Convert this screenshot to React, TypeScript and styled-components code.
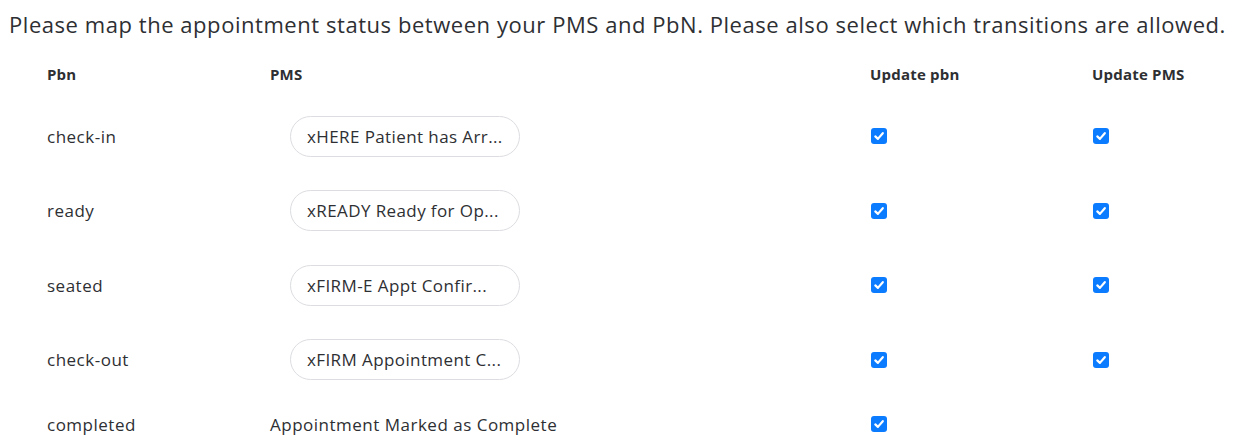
import React from 'react';
import styled, { createGlobalStyle } from 'styled-components';

const GlobalStyle = createGlobalStyle`
  html, body {
    margin: 0;
    padding: 0;
    background: #ffffff;
  }
  body {
    font-family: 'Open Sans', 'Noto Sans', sans-serif;
    color: #2e2f33;
  }
`;

const Page = styled.div`
  width: 1239px;
  height: 446px;
  overflow: hidden;
  padding: 10px 0 0 9px;
  box-sizing: border-box;
`;

const Title = styled.h2`
  margin: 0;
  font-size: 22px;
  font-weight: 400;
  line-height: 28px;
  letter-spacing: 0.55px;
  color: #2e2f33;
  white-space: nowrap;
`;

const Table = styled.div`
  display: grid;
  grid-template-columns: 223px 600px 222px 1fr;
  padding-left: 38px;
  margin-top: 25px;
`;

const HeadCell = styled.div`
  font-size: 15px;
  font-weight: 700;
  letter-spacing: 0.2px;
  line-height: 22px;
  height: 22px;
  margin-bottom: 14px;
`;

const Cell = styled.div<{ $short?: boolean }>`
  display: flex;
  align-items: center;
  height: ${({ $short }) => ($short ? '54px' : '74.5px')};
  font-size: 17px;
  letter-spacing: 0.5px;
`;

const Pill = styled.div`
  margin-left: 20px;
  width: 230px;
  height: 41px;
  box-sizing: border-box;
  border: 1px solid #dcdde1;
  border-radius: 21px;
  padding: 0 16px;
  display: flex;
  align-items: center;
  font-size: 17px;
  letter-spacing: 0.4px;
  white-space: nowrap;
  overflow: hidden;
`;

const Box = styled.span`
  display: inline-flex;
  align-items: center;
  justify-content: center;
  width: 16px;
  height: 16px;
  margin-left: 1px;
  border-radius: 3px;
  background: #0b7bff;
`;

const Checkbox = () => (
  <Box>
    <svg width="12" height="12" viewBox="0 0 12 12">
      <path d="M2.3 6.4 L4.9 8.9 L9.8 3.2" fill="none" stroke="#fff" strokeWidth="2.2" strokeLinecap="round" strokeLinejoin="round" />
    </svg>
  </Box>
);

const rows = [
  { pbn: 'check-in', pms: 'xHERE Patient has Arr...', pbnCheck: true, pmsCheck: true },
  { pbn: 'ready', pms: 'xREADY Ready for Op...', pbnCheck: true, pmsCheck: true },
  { pbn: 'seated', pms: 'xFIRM-E Appt Confir...', pbnCheck: true, pmsCheck: true },
  { pbn: 'check-out', pms: 'xFIRM Appointment C...', pbnCheck: true, pmsCheck: true },
];

const App = () => (
  <Page>
    <GlobalStyle />
    <Title>
      Please map the appointment status between your PMS and PbN. Please also select which transitions are allowed.
    </Title>
    <Table>
      <HeadCell>Pbn</HeadCell>
      <HeadCell>PMS</HeadCell>
      <HeadCell>Update pbn</HeadCell>
      <HeadCell>Update PMS</HeadCell>
      {rows.map((r) => (
        <React.Fragment key={r.pbn}>
          <Cell>{r.pbn}</Cell>
          <Cell>
            <Pill>{r.pms}</Pill>
          </Cell>
          <Cell>{r.pbnCheck && <Checkbox />}</Cell>
          <Cell>{r.pmsCheck && <Checkbox />}</Cell>
        </React.Fragment>
      ))}
      <Cell $short>completed</Cell>
      <Cell $short>Appointment Marked as Complete</Cell>
      <Cell $short>
        <Checkbox />
      </Cell>
      <Cell $short />
    </Table>
  </Page>
);

export default App;
